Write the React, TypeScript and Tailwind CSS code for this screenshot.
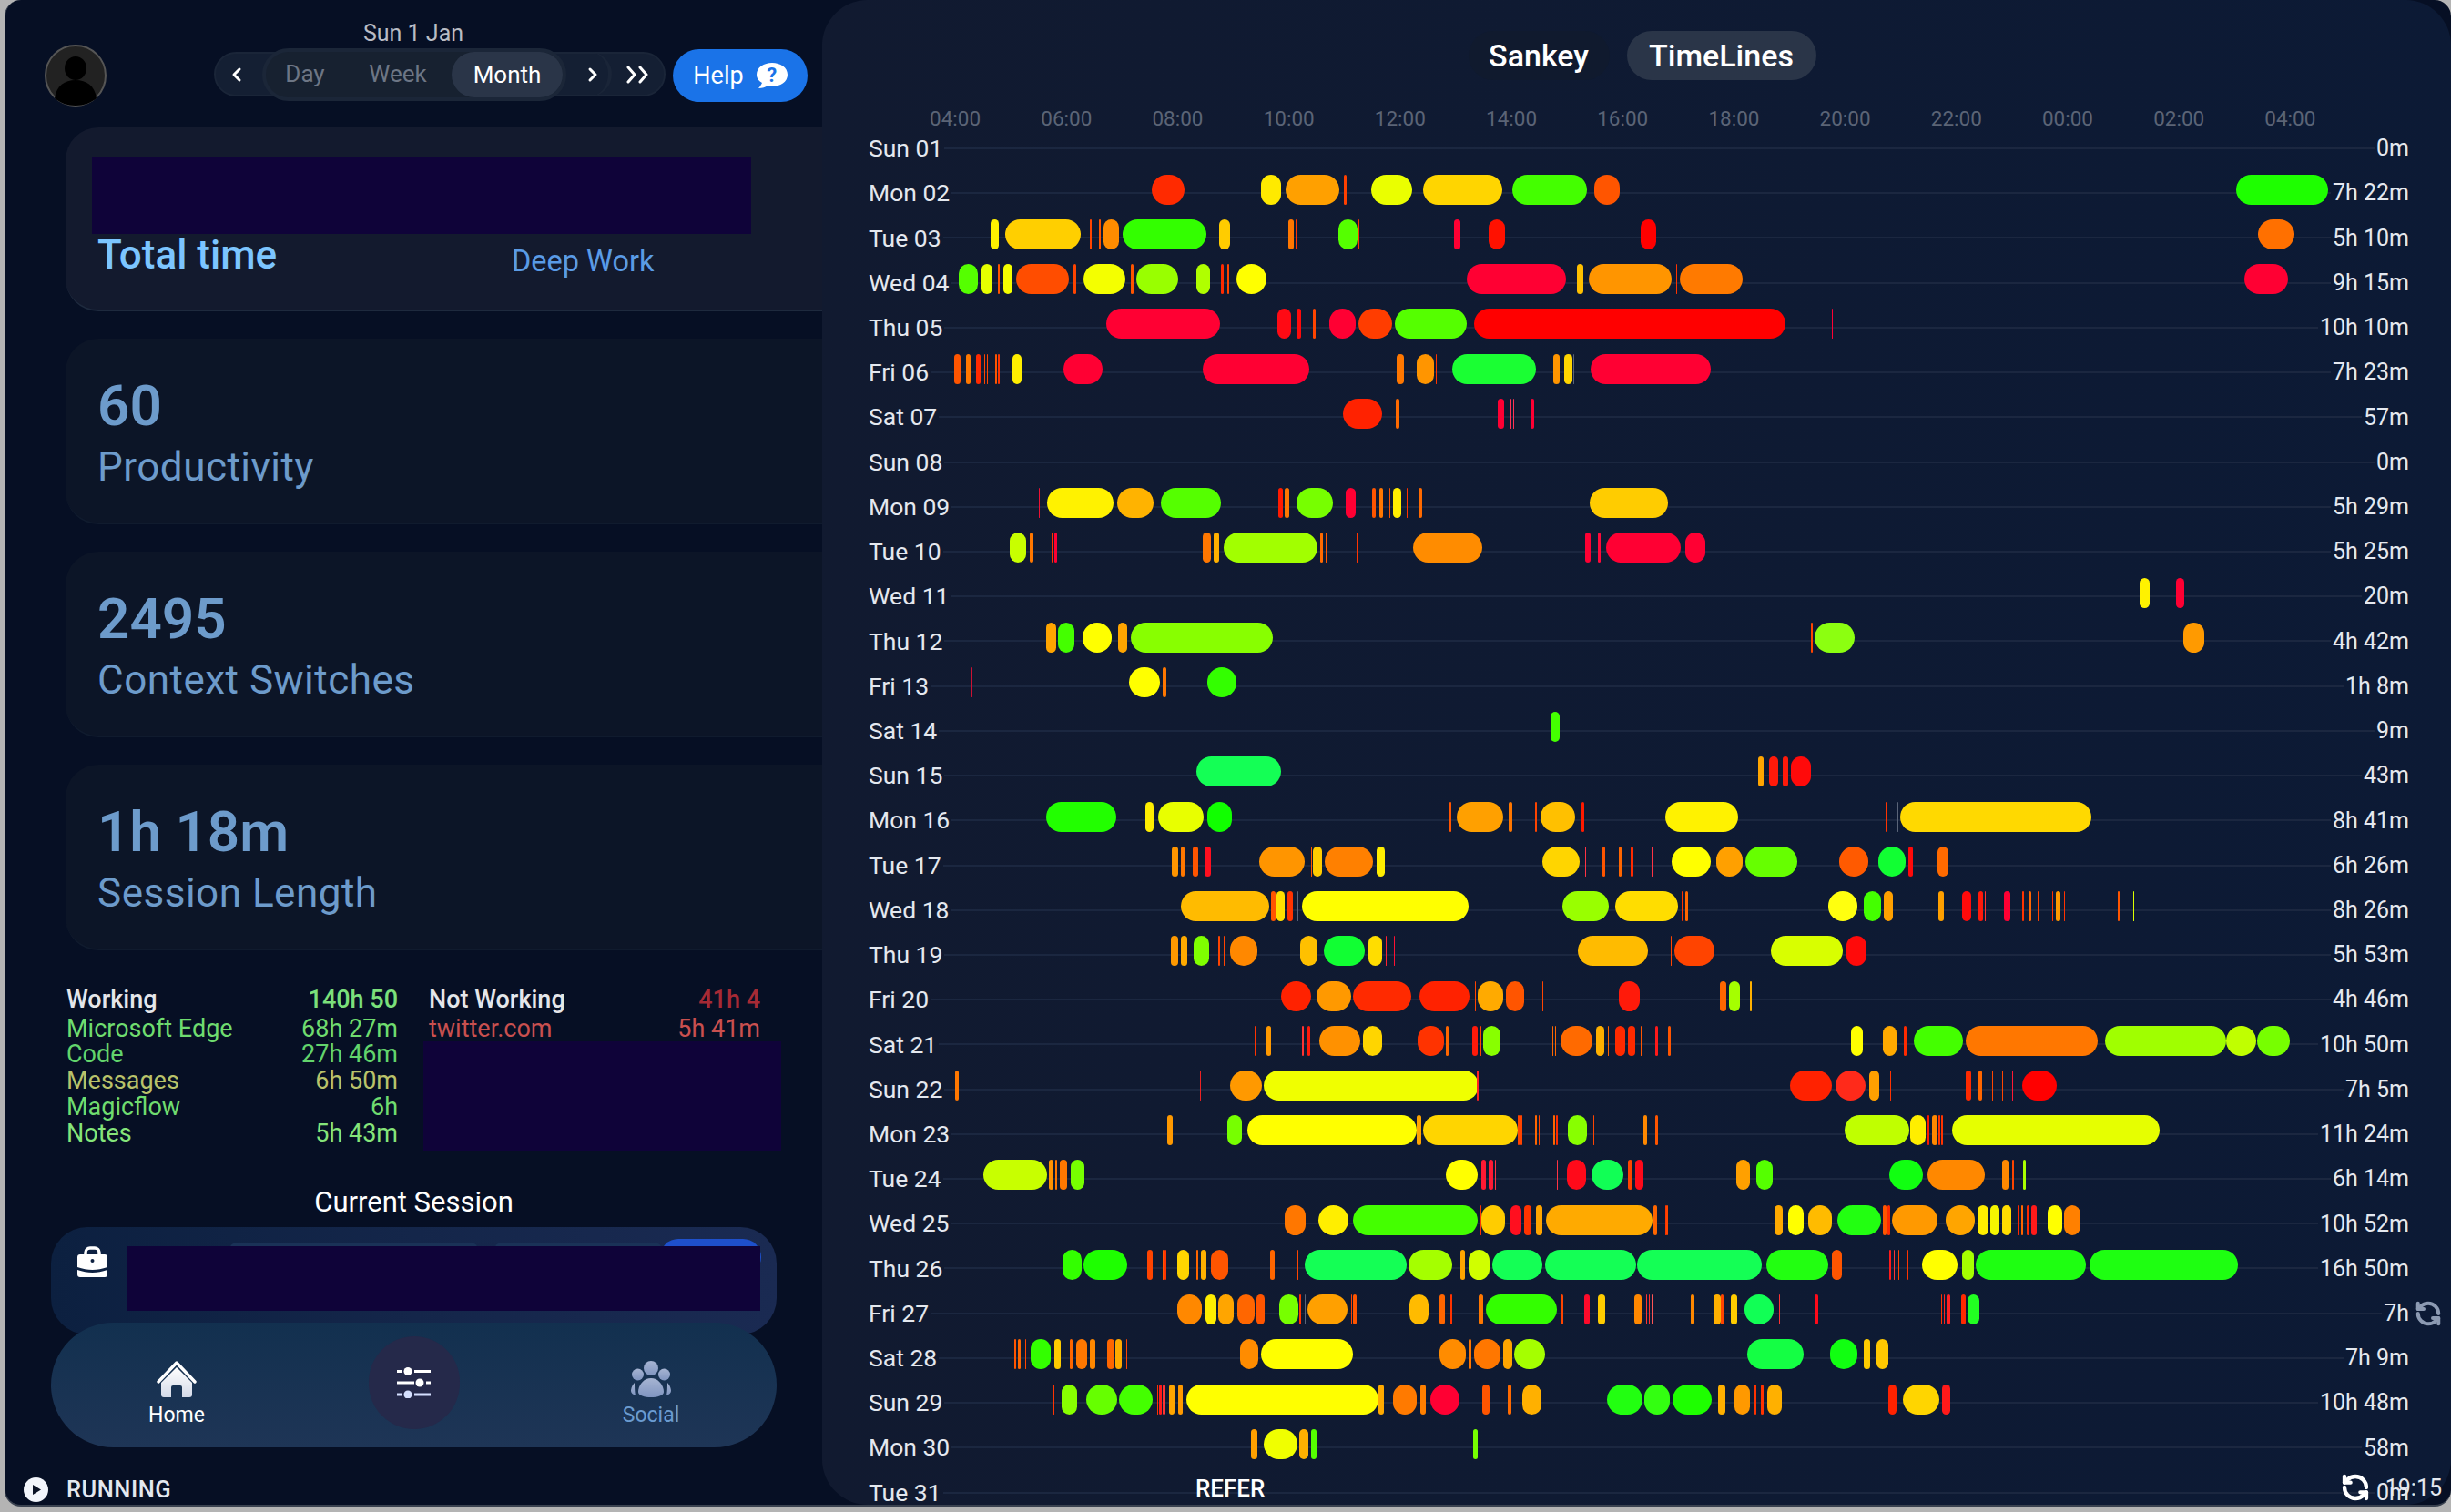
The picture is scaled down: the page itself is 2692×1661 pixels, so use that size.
import React from 'react'
import { ChevronLeft, ChevronRight, RefreshCcw } from 'lucide-react'

type Bar = [number, number, string]
interface Day {
  d: string
  t: string
  a?: Bar[]
  b?: Bar[]
}

// a: chart units, b: same units shifted by 1554. 1.7422 units = 1px
const X_SCALE = 1.7422
const B_SHIFT = 1554
const GREY = '#5a6478'

const days: Day[] = [
  { d: 'Sun 01', t: '0m' },
  {
    d: 'Mon 02', t: '7h 22m',
    a: [[636, 699, '#ff2a00'], [845, 884, '#ffea00'], [892, 995, '#ffa000'], [1004, 1009, '#ff4000'], [1056, 1134, '#eaff00'], [1155, 1307, '#ffd500'], [1326, 1469, '#44ff00'], [1483, 1531, '#ff5500']],
    b: [[1157, 1333, '#1eff00']],
  },
  {
    d: 'Tue 03', t: '5h 10m',
    a: [[328, 343, '#fff000'], [355, 500, '#ffcf00'], [517, 521, '#ff4400'], [535, 538, '#ff5500'], [543, 574, '#ff8c00'], [580, 740, '#33ff00'], [765, 786, '#ffcc00'], [897, 907, '#ff7700'], [911, 913, '#ff3300'], [993, 1029, '#55ff00'], [1031, 1033, '#ff3300'], [1214, 1227, '#ff0033'], [1281, 1312, '#ff1100']],
    b: [[17, 47, '#ff0000'], [1199, 1268, '#ff7000']],
  },
  {
    d: 'Wed 04', t: '9h 15m',
    a: [[267, 303, '#55ff00'], [310, 331, '#e6ff00'], [341, 345, '#ff5500'], [352, 369, '#f5ff00'], [377, 478, '#ff4d00'], [486, 491, '#ff4400'], [505, 585, '#f4ff00'], [596, 601, '#ff5500'], [606, 686, '#99ff00'], [721, 748, '#b0ff00'], [768, 774, '#ff2a00'], [781, 784, '#ff4400'], [798, 855, '#ffff00'], [1239, 1429, '#ff0033'], [1450, 1462, '#ffc000'], [1472, 1631, '#ff9500']],
    b: [[85, 87, '#ff3300'], [92, 213, '#ff7a00'], [1173, 1256, '#ff0033']],
  },
  {
    d: 'Thu 05', t: '10h 10m',
    a: [[549, 767, '#ff0033'], [876, 902, '#ff0a14'], [913, 922, '#ff0a0a'], [944, 950, '#ff4400'], [976, 1026, '#ff0033'], [1031, 1096, '#ff3d00'], [1101, 1239, '#55ff00'], [1253, 1848, '#ff0000']],
    b: [[383, 385, '#ff0033']],
  },
  {
    d: 'Fri 06', t: '7h 23m',
    a: [[258, 270, '#ff5500'], [280, 289, '#ff7700'], [300, 308, '#ff2a00'], [315, 317, '#ff4400'], [320, 323, '#ff4400'], [336, 339, '#ff5500'], [342, 345, '#ff3300'], [369, 387, '#ffee00'], [467, 542, '#ff0033'], [733, 937, '#ff0033'], [1105, 1119, '#ff7700'], [1143, 1176, '#ff9500'], [1179, 1181, '#ff3300'], [1211, 1371, '#1aff33'], [1404, 1417, '#ff9500'], [1425, 1440, '#ffd500'], [1443, 1444, GREY], [1476, 1706, '#ff0033']],
  },
  {
    d: 'Sat 07', t: '57m',
    a: [[1002, 1077, '#ff2200'], [1103, 1110, '#ff6a00'], [1298, 1310, '#ff0033'], [1322, 1324, '#ff3355'], [1327, 1330, '#ff3355'], [1361, 1368, '#ff0033']],
  },
  { d: 'Sun 08', t: '0m' },
  {
    d: 'Mon 09', t: '5h 29m',
    a: [[420, 422, '#ee1133'], [436, 563, '#fff200'], [570, 639, '#ffb300'], [653, 768, '#55ff00'], [878, 886, '#ff1a00'], [890, 899, '#ff7700'], [913, 983, '#77ff00'], [1007, 1026, '#ff0033'], [1058, 1064, '#ff5500'], [1072, 1078, '#ff7700'], [1091, 1093, '#ff5500'], [1098, 1113, '#ffee00'], [1124, 1126, '#ff3300'], [1146, 1153, '#ff6a00'], [1474, 1624, '#ffcc00']],
  },
  {
    d: 'Tue 10', t: '5h 25m',
    a: [[364, 396, '#c8ff00'], [402, 409, '#ff7700'], [444, 447, '#ff3300'], [449, 454, '#ff0033'], [733, 749, '#ff7700'], [754, 765, '#ffb000'], [774, 953, '#a2ff00'], [958, 964, '#ff6a00'], [969, 971, '#ff5500'], [1028, 1030, '#ff3300'], [1136, 1268, '#ff8c00'], [1465, 1476, '#ff0033'], [1490, 1495, '#ff0a3a'], [1505, 1648, '#ff0033']],
    b: [[103, 141, '#ff0033']],
  },
  {
    d: 'Wed 11', t: '20m',
    b: [[972, 991, '#fff200'], [1031, 1033, '#ff3300'], [1042, 1058, '#ff0033']],
  },
  {
    d: 'Thu 12', t: '4h 42m',
    a: [[434, 453, '#ffa500'], [457, 488, '#44ff00'], [504, 559, '#ffff00'], [571, 589, '#ffa500'], [596, 868, '#88ff00']],
    b: [[343, 347, '#ff4400'], [351, 427, '#8cff10'], [1056, 1096, '#ff9a00']],
  },
  {
    d: 'Fri 13', t: '1h 8m',
    a: [[291, 293, '#cc1133'], [592, 652, '#ffff00'], [657, 664, '#ff7700'], [742, 798, '#33ff00']],
  },
  { d: 'Sat 14', t: '9m', a: [[1399, 1416, '#44ff00']] },
  {
    d: 'Sun 15', t: '43m',
    a: [[721, 883, '#14ff55']],
    b: [[242, 253, '#ffa500'], [263, 280, '#ff1a0a'], [289, 300, '#ff1a0a'], [305, 343, '#ff0a0a']],
  },
  {
    d: 'Mon 16', t: '8h 41m',
    a: [[434, 568, '#22ff00'], [624, 639, '#ffee00'], [648, 735, '#e8ff00'], [742, 789, '#11ff00'], [1206, 1209, '#ff5500'], [1220, 1308, '#ffa000'], [1319, 1326, '#ff7700'], [1369, 1373, '#ff4400'], [1380, 1446, '#ffc000'], [1458, 1463, '#ff1a00']],
    b: [[64, 204, '#fff200'], [486, 490, '#ff3300'], [508, 509, GREY], [514, 880, '#ffd900']],
  },
  {
    d: 'Tue 17', t: '6h 26m',
    a: [[674, 686, '#ff9500'], [692, 698, '#ff7700'], [714, 725, '#ff5500'], [737, 749, '#ff0f1f'], [841, 929, '#ff9500'], [940, 942, '#ff5500'], [944, 962, '#ffcc00'], [967, 1059, '#ff8000'], [1066, 1082, '#ffee00'], [1383, 1455, '#ffd500'], [1465, 1467, '#ff3344'], [1498, 1504, '#ff5500'], [1530, 1535, '#ff6600'], [1552, 1557, '#ff2a00']],
    b: [[38, 40, '#ff3344'], [77, 152, '#ffff00'], [162, 212, '#ffa000'], [218, 317, '#66ff00'], [397, 453, '#ff5a00'], [472, 524, '#11ff33'], [530, 538, '#ff0a0a'], [585, 606, '#ff6a00']],
  },
  {
    d: 'Wed 18', t: '8h 26m',
    a: [[692, 861, '#ffbb00'], [864, 872, '#ff5500'], [875, 890, '#ffe000'], [896, 906, '#ff3300'], [915, 916, GREY], [923, 1242, '#ffff00'], [1422, 1511, '#99ff00'], [1523, 1643, '#ffdd00']],
    b: [[96, 99, '#ff3300'], [103, 108, '#ff6600'], [376, 432, '#ffff0f'], [444, 477, '#44ff00'], [483, 500, '#ffa000'], [587, 598, '#ffa000'], [632, 650, '#ff0a0a'], [664, 672, '#ff1a0a'], [676, 678, '#ff3333'], [713, 725, '#ff0033'], [747, 751, '#ff3300'], [760, 765, '#ff6600'], [777, 779, '#ff4400'], [805, 807, '#ff3300'], [812, 821, '#ff9900'], [827, 829, '#ff3300'], [930, 934, '#ff5500'], [960, 962, '#ddff00']],
  },
  {
    d: 'Thu 19', t: '5h 53m',
    a: [[672, 686, '#ff9900'], [692, 704, '#ffaa00'], [716, 746, '#7fff00'], [763, 767, '#ff4400'], [773, 775, '#ff4400'], [786, 838, '#ff8800'], [920, 953, '#ffc000'], [966, 1044, '#11ff33'], [1051, 1077, '#ffdd00'], [1084, 1086, '#ff2233'], [1099, 1101, '#ff1133'], [1451, 1585, '#ffbb00']],
    b: [[75, 77, '#ff4400'], [82, 159, '#ff4400'], [267, 404, '#d8ff00'], [411, 449, '#ff0a0a']],
  },
  {
    d: 'Fri 20', t: '4h 46m',
    a: [[883, 941, '#ff2200'], [952, 1017, '#ff9900'], [1021, 1132, '#ff2a00'], [1148, 1244, '#ff2200'], [1255, 1257, '#ff4400'], [1260, 1308, '#ffaa00'], [1314, 1348, '#ff5500'], [1383, 1385, '#ff4400'], [1530, 1570, '#ff1a0a']],
    b: [[169, 181, '#ff6600'], [187, 207, '#a5ff00'], [226, 230, '#ffb000']],
  },
  {
    d: 'Sat 21', t: '10h 50m',
    a: [[833, 836, '#ff3300'], [855, 864, '#ff9900'], [924, 926, '#ff3333'], [934, 939, '#ff1a0a'], [956, 1035, '#ff9100'], [1040, 1077, '#ffd500'], [1145, 1196, '#ff3300'], [1199, 1204, '#ff6600'], [1249, 1259, '#ff1a0a'], [1265, 1267, '#ff4400'], [1270, 1303, '#88ff00'], [1402, 1404, '#ff6600'], [1408, 1410, '#ff6600'], [1418, 1479, '#ff6a00'], [1486, 1502, '#ffb000'], [1508, 1510, '#ff6600'], [1523, 1542, '#ff2a00'], [1547, 1561, '#ff2a00']],
    b: [[17, 19, '#ff5500'], [46, 51, '#ff1a1a'], [70, 75, '#ff5500'], [420, 443, '#ffff00'], [481, 507, '#ffaa00'], [521, 526, '#ff2a00'], [540, 634, '#44ff00'], [639, 892, '#ff7700'], [906, 1138, '#a0ff00'], [1138, 1195, '#c0ff00'], [1197, 1260, '#77ff00']],
  },
  {
    d: 'Sun 22', t: '7h 5m',
    a: [[260, 267, '#ff7700'], [728, 730, '#ee2222'], [786, 847, '#ff9900'], [850, 1262, '#f0ff00'], [1258, 1261, '#ff2222']],
    b: [[303, 384, '#ff2200'], [390, 448, '#ff2a1a'], [455, 474, '#ffa000'], [495, 497, '#ff3300'], [639, 650, '#ff2a00'], [664, 671, '#ff6600'], [690, 692, '#ff4400'], [709, 711, '#ff4400'], [728, 730, '#ff1a33'], [747, 814, '#ff0000']],
  },
  {
    d: 'Mon 23', t: '11h 24m',
    a: [[666, 676, '#ff9900'], [781, 808, '#77ff00'], [815, 817, '#ff4400'], [819, 1143, '#ffff00'], [1143, 1152, '#ffa500'], [1155, 1337, '#ffd500'], [1337, 1340, '#ff4400'], [1342, 1345, '#ff4400'], [1369, 1372, '#ff6600'], [1376, 1378, '#ff4400'], [1405, 1408, '#ff6600'], [1410, 1413, '#ff2a00'], [1432, 1469, '#88ff00'], [1481, 1483, '#ff4400']],
    b: [[23, 29, '#ff8800'], [45, 51, '#ff5500'], [408, 532, '#c0ff00'], [533, 563, '#ffee00'], [566, 570, '#ff1a00'], [575, 585, '#ff8800'], [588, 591, '#ff3300'], [593, 596, '#ff3300'], [613, 1010, '#e6ff00']],
  },
  {
    d: 'Tue 24', t: '6h 14m',
    a: [[314, 436, '#c8ff00'], [439, 447, '#ff9100'], [451, 455, '#ff7700'], [460, 474, '#ff7700'], [481, 507, '#77ff00'], [1199, 1260, '#ffff00'], [1267, 1275, '#ff1a33'], [1280, 1290, '#ff1a33'], [1292, 1294, '#ff3344'], [1411, 1413, '#ff3344'], [1430, 1467, '#ff0a1a'], [1477, 1538, '#11ff55'], [1547, 1555, '#ff4400'], [1561, 1577, '#ff0a1a']],
    b: [[200, 227, '#ffa000'], [238, 270, '#55ff00'], [493, 558, '#11ff11'], [566, 676, '#ff8800'], [709, 721, '#ff8800'], [729, 732, '#ff4400'], [749, 754, '#aaff00']],
  },
  {
    d: 'Wed 25', t: '10h 52m',
    a: [[890, 930, '#ff7700'], [955, 1012, '#ffee00'], [1021, 1260, '#44ff00'], [1265, 1267, '#ff3300'], [1267, 1312, '#ffcc00'], [1322, 1344, '#ff0f1f'], [1348, 1362, '#ff3300'], [1371, 1383, '#ffa500'], [1390, 1594, '#ffaa00']],
    b: [[42, 49, '#ff6600'], [64, 66, '#ff3300'], [67, 70, '#ff4400'], [274, 289, '#ffaa00'], [299, 330, '#ffff00'], [338, 383, '#ffbb00'], [394, 478, '#22ff11'], [481, 488, '#ff5500'], [490, 495, '#ff2a00'], [498, 585, '#ff9900'], [601, 657, '#ffa500'], [662, 683, '#ffee00'], [686, 704, '#f5f500'], [709, 727, '#ffdd00'], [739, 741, '#ff2a00'], [746, 749, '#ff6600'], [757, 762, '#ff2a00'], [765, 775, '#ff1a1a'], [796, 824, '#ffff00'], [828, 859, '#ff8000']],
  },
  {
    d: 'Thu 26', t: '16h 50m',
    a: [[465, 501, '#33ff00'], [505, 589, '#1eff00'], [627, 638, '#ff4400'], [657, 659, '#ff5500'], [661, 663, '#ff3300'], [685, 707, '#ffd500'], [721, 725, '#ff6600'], [730, 741, '#ffb000'], [749, 782, '#ff5500'], [862, 871, '#ff6600'], [915, 917, '#ff4400'], [929, 1124, '#14ff55'], [1127, 1211, '#a5ff00'], [1227, 1235, '#ffa500'], [1242, 1283, '#d0ff00'], [1288, 1384, '#14ff55'], [1389, 1562, '#14ff55'], [1564, 1804, '#14ff55']],
    b: [[258, 376, '#22ff11'], [383, 402, '#ff5500'], [493, 496, '#ff1a1a'], [502, 504, '#ff3333'], [510, 512, '#ff4400'], [527, 530, '#ff3300'], [556, 624, '#ffff00'], [632, 655, '#a5ff00'], [659, 870, '#1eff11'], [876, 1160, '#1eff11']],
  },
  {
    d: 'Fri 27', t: '7h',
    a: [[685, 732, '#ff8800'], [739, 760, '#ffee00'], [763, 793, '#ffa500'], [800, 832, '#ff6600'], [836, 852, '#ff5500'], [880, 916, '#77ff00'], [918, 922, '#ff3300'], [928, 930, GREY], [934, 1011, '#ffa000'], [1017, 1020, '#ff4400'], [1021, 1028, '#ff5500'], [1129, 1166, '#ffbb00'], [1186, 1197, '#ff6600'], [1207, 1211, '#ff3300'], [1261, 1270, '#ff7700'], [1275, 1411, '#33ff00'], [1419, 1423, '#ff4400'], [1463, 1474, '#ff0a2a'], [1490, 1504, '#ffcc00'], [1559, 1573, '#ff8800']],
    b: [[28, 30, '#ff3333'], [33, 35, '#ff3333'], [39, 41, '#ff5555'], [113, 120, '#ff8800'], [157, 170, '#ffb000'], [171, 176, '#ff4400'], [190, 202, '#ffcc00'], [216, 272, '#11ff55'], [282, 284, '#ff3333'], [351, 357, '#ff0a1a'], [592, 595, '#ff3300'], [598, 600, '#ff2222'], [603, 610, '#ff2222'], [631, 640, '#ff2a00'], [643, 666, '#22ff22']],
  },
  {
    d: 'Sat 28', t: '7h 9m',
    a: [[373, 377, '#ff5500'], [380, 385, '#ff6600'], [393, 396, '#ff4400'], [404, 442, '#33ff00'], [449, 462, '#ffcc00'], [479, 484, '#ff6600'], [491, 513, '#ff7700'], [517, 528, '#ff8800'], [551, 564, '#ff6600'], [567, 579, '#ffaa00'], [587, 589, '#ff4400'], [805, 840, '#ff8c00'], [845, 1021, '#ffff00'], [1186, 1237, '#ff8c00'], [1243, 1248, '#ff7700'], [1252, 1304, '#ff7700'], [1308, 1326, '#ffa500'], [1330, 1389, '#a5ff00']],
    b: [[221, 329, '#14ff44'], [380, 432, '#11ff11'], [444, 456, '#ffcc00'], [469, 491, '#ffc800']],
  },
  {
    d: 'Sun 29', t: '10h 48m',
    a: [[448, 450, '#ff3300'], [463, 493, '#88ff00'], [510, 570, '#66ff00'], [573, 638, '#44ff00'], [646, 648, '#ff3300'], [650, 655, '#ff1a1a'], [656, 662, '#ff3333'], [669, 680, '#ffa500'], [686, 695, '#ff9900'], [702, 1070, '#ffff00'], [1070, 1080, '#ffaa00'], [1098, 1143, '#ff7a00'], [1150, 1160, '#ff8000'], [1169, 1225, '#ff0033'], [1268, 1282, '#ff5500'], [1317, 1324, '#ff6a00'], [1345, 1382, '#ffb000'], [1507, 1575, '#22ff11']],
    b: [[25, 73, '#33ff11'], [78, 153, '#1eff00'], [166, 179, '#ffb000'], [197, 227, '#ff9900'], [235, 239, '#ff3300'], [248, 253, '#ff3300'], [260, 287, '#ffb000'], [491, 507, '#ff2200'], [519, 589, '#ffd500'], [594, 610, '#ff1a1a']],
  },
  {
    d: 'Mon 30', t: '58m',
    a: [[826, 838, '#ffa000'], [850, 915, '#f0ff00'], [918, 936, '#ffb000'], [941, 951, '#55ff00'], [1251, 1260, '#77ff00']],
  },
  { d: 'Tue 31', t: '0m' },
]

const hours = ['04:00', '06:00', '08:00', '10:00', '12:00', '14:00', '16:00', '18:00', '20:00', '22:00', '00:00', '02:00', '04:00']

const working: [string, string, string][] = [
  ['Microsoft Edge', '68h 27m', 'text-[#6fdc6f]'],
  ['Code', '27h 46m', 'text-[#62d46c]'],
  ['Messages', '6h 50m', 'text-[#b9c26a]'],
  ['Magicflow', '6h', 'text-[#6fdc6f]'],
  ['Notes', '5h 43m', 'text-[#85e57a]'],
]

// panel starts 903px from the page edge, bars are 33px tall pills
function TimelineBar({ start, end, color }: { start: number; end: number; color: string }) {
  const left = (start / X_SCALE) - 3
  const width = (end - start) / X_SCALE
  return (
    <div
      className="absolute top-[4px] h-[33px] rounded-[16.500px]"
      style={{ left, width, backgroundColor: color }}
    />
  )
}

function TimelineRow({ day }: { day: Day }) {
  return (
    <div className="relative flex items-center h-[49.23px] pl-[51px] pr-[46px]">
      <span className="text-[26.500px] text-[#e4e8ef]">{day.d}</span>
      <div className="flex-1 h-[2px] mx-[2px] bg-[#1b2740]" />
      <span className="text-[25px] text-[#e4e8ef]">{day.t}</span>
      {day.a?.map(([s, e, c]) => <TimelineBar key={s} start={s} end={e} color={c} />)}
      {day.b?.map(([s, e, c]) => <TimelineBar key={s} start={s + B_SHIFT} end={e + B_SHIFT} color={c} />)}
    </div>
  )
}

function StatCard({ value, label }: { value: string; label: string }) {
  return (
    <div className="h-[204px] ml-[66px] mt-[30px] pl-[35px] pt-[35px] rounded-l-[36px] bg-[#0c1527] border-b-2 border-[#101b2e]">
      <div className="text-[62px] leading-[78px] font-semibold text-[#6d9bcb]">{value}</div>
      <div className="text-[44px] leading-[50px] mt-[3px] tracking-[0.5px] text-[#6d9bcb]">{label}</div>
    </div>
  )
}

function Avatar() {
  return (
    <svg viewBox="0 0 68 70" className="w-[68px] h-[70px] mt-[48px] shrink-0">
      <circle cx="34" cy="35" r="33" fill="#222" stroke="#555" strokeWidth="2" />
      <ellipse cx="34" cy="27" rx="12" ry="13" fill="#000" />
      <path d="M11 60c2-14 11-20 23-20s21 6 23 20c-6 5-14 8-23 8s-17-3-23-8z" fill="#000" />
    </svg>
  )
}

function HelpBubble() {
  return (
    <span className="relative flex items-center justify-center w-[34px] h-[28px] ml-[14px]">
      <svg viewBox="0 0 34 28" className="absolute inset-0">
        <path d="M17 0c9 0 17 5 17 13s-8 13-17 13c-2 0-3 0-5-1-2 2-6 3-10 3 2-2 3-4 4-6C2 20 0 17 0 13 0 5 8 0 17 0z" fill="#fff" />
      </svg>
      <span className="relative text-[22px] leading-none font-bold text-[#1a73e8]">?</span>
    </span>
  )
}

function HomeIcon() {
  return (
    <svg viewBox="0 0 44 41" className="w-[44px] h-[41px]">
      <defs>
        <linearGradient id="homeFill" x1="0" y1="0" x2="0" y2="1">
          <stop offset="0" stopColor="#fff" />
          <stop offset="1" stopColor="#d4dae8" />
        </linearGradient>
      </defs>
      <path d="M2 24L22 3l20 21" fill="none" stroke="#fff" strokeWidth="3.4" strokeLinecap="round" strokeLinejoin="round" />
      <path d="M5 25L22 8l17 17v13a3 3 0 0 1-3 3h-8V30a2 2 0 0 0-2-2h-8a2 2 0 0 0-2 2v11H8a3 3 0 0 1-3-3z" fill="url(#homeFill)" />
    </svg>
  )
}

function SlidersIcon() {
  return (
    <svg viewBox="0 0 37 34" className="w-[37px] h-[34px]" stroke="#fff" strokeWidth="3" fill="#fff">
      <path d="M0 4.5h5M19 4.5h18M0 17h19M32 17h5" />
      <circle cx="12" cy="4.5" r="4.5" stroke="none" />
      <circle cx="25" cy="17" r="4.5" stroke="none" />
      <path d="M0 30h5M19 30h18" stroke="#d5e0ff" />
      <circle cx="12" cy="30" r="4.5" stroke="none" fill="#d5e0ff" />
    </svg>
  )
}

function SocialIcon() {
  return (
    <svg viewBox="0 0 44 40" className="w-[44px] h-[40px]">
      <defs>
        <linearGradient id="socialFill" x1="0" y1="0" x2="0" y2="1">
          <stop offset="0" stopColor="#a6b4d2" />
          <stop offset="1" stopColor="#8095c0" />
        </linearGradient>
      </defs>
      <g fill="url(#socialFill)">
        <circle cx="22" cy="8" r="8" />
        <circle cx="7.5" cy="15" r="6.5" />
        <circle cx="36.5" cy="15" r="6.5" />
        <path d="M22 19c-9 0-14 9-14 15 0 4 7 6 14 6s14-2 14-6c0-6-5-15-14-15z" />
        <path d="M4 24c-3 3-4 7-4 9 0 2 2 4 5 5-1-5-1-9-1-14zM40 24c3 3 4 7 4 9 0 2-2 4-5 5 1-5 1-9 1-14z" />
      </g>
    </svg>
  )
}

function BriefcaseIcon() {
  return (
    <svg viewBox="0 0 33 34" className="w-[33px] h-[34px] shrink-0" fill="#fff">
      <path d="M9 9V7a5 5 0 0 1 5-5h5a5 5 0 0 1 5 5v2" fill="none" stroke="#fff" strokeWidth="3.5" />
      <path fillRule="evenodd" d="M3 9h27a3 3 0 0 1 3 3v11c-6 2-11 3-16.500 3S6 25 0 23V12a3 3 0 0 1 3-3zm13.500 5a2 2 0 1 0 0 4 2 2 0 0 0 0-4z" />
      <path d="M0 26c6 2 11 3 16.500 3S27 28 33 26v5a3 3 0 0 1-3 3H3a3 3 0 0 1-3-3z" />
    </svg>
  )
}

function DoubleChevron() {
  return (
    <svg viewBox="0 0 26 20" className="w-[26px] h-[20px]" fill="none" stroke="#fff" strokeWidth="3" strokeLinecap="round" strokeLinejoin="round">
      <path d="M3 2l7 8-7 8M16 2l7 8-7 8" />
    </svg>
  )
}

function Sidebar() {
  return (
    <div className="w-[897px] shrink-0 flex flex-col">
      {/* Top bar */}
      <div className="flex items-start h-[134px] pl-[43px]">
        <Avatar />
        <div className="ml-[118px] w-[496px] shrink-0">
          <div className="pr-[58px] text-center text-[25px] leading-[26px] mt-[24px] text-[#b8bcc4]">Sun 1 Jan</div>
          <div className="flex items-center h-[49px] mt-[7px] rounded-full bg-[#141f33] border-2 border-[#1a2538]">
            <div className="w-[51px] pr-[6px] flex justify-center"><ChevronLeft size={24} strokeWidth={3} color="#fff" /></div>
            <div className="flex items-center w-[334px] h-[58px] rounded-full bg-[#172130] border-4 border-[#1b2638]">
              <span className="w-[86px] text-center text-[26px] text-[#6d7685]">Day</span>
              <span className="w-[118px] text-center text-[26px] text-[#6d7685]">Week</span>
              <span className="flex-1 h-[50px] rounded-full bg-[#2a3548] text-center text-[26px] leading-[50px] text-white">Month</span>
            </div>
            <div className="w-[50px] h-[49px] pl-[12px] flex items-center justify-center rounded-r-full border-r-4 border-[#1a2538]"><ChevronRight size={24} strokeWidth={3} color="#fff" /></div>
            <div className="flex-1 pr-[2px] flex justify-center"><DoubleChevron /></div>
          </div>
        </div>
        <div className="flex items-center justify-center w-[148px] h-[58px] ml-[8px] mt-[54px] rounded-full bg-[#1a73e8]">
          <span className="text-[27px] text-white">Help</span>
          <HelpBubble />
        </div>
      </div>

      {/* Total time */}
      <div className="h-[202px] ml-[66px] mt-[6px] pl-[29px] pt-[32px] rounded-l-[36px] bg-[#131a2e] border-b-2 border-[#1e2a3e]">
        <div className="w-[724px] h-[85px] bg-[#0f0339]" />
        <div className="flex pl-[6px]">
          <span className="w-[455px] text-[44px] leading-[46px] font-medium text-[#7cc5ff]">Total time</span>
          <span className="text-[32.500px] leading-[46px] mt-[7px] text-[#5a9be6]">Deep Work</span>
        </div>
      </div>

      <StatCard value="60" label="Productivity" />
      <StatCard value="2495" label="Context Switches" />
      <StatCard value="1h 18m" label="Session Length" />

      {/* Working / not working */}
      <div className="grid grid-cols-2 gap-x-[34px] w-[762px] ml-[67px] mt-[40px] text-[27px] leading-[28.700px]">
        <div>
          <div className="flex justify-between font-medium mb-[3px]">
            <span className="text-[#e4e6ea]">Working</span>
            <span className="text-[#7be07b]">140h 50</span>
          </div>
          {working.map(([name, time, color]) => (
            <div key={name} className={`flex justify-between ${color}`}>
              <span>{name}</span>
              <span>{time}</span>
            </div>
          ))}
        </div>
        <div>
          <div className="flex justify-between font-medium mb-[3px]">
            <span className="text-[#e4e6ea]">Not Working</span>
            <span className="text-[#a52a35]">41h 4</span>
          </div>
          <div className="flex justify-between text-[#c9504f]">
            <span>twitter.com</span>
            <span>5h 41m</span>
          </div>
          <div className="w-[393px] h-[120px] -ml-[6px] bg-[#0f0339]" />
        </div>
      </div>

      <div className="text-center text-[31px] leading-[32px] mt-[41px] text-white">Current Session</div>

      {/* Current session */}
      <div className="relative flex items-start h-[118px] w-[797px] ml-[50px] mt-[11px] pl-[29px] pt-[21px] rounded-[40px] bg-gradient-to-r from-[#0c2040] via-[#14264a] to-[#1a2a52]">
        <BriefcaseIcon />
        <div className="absolute top-[17px] left-[196px] w-[273px] h-[8px] rounded-t-[10px] bg-[#1a3257]" />
        <div className="absolute top-[17px] left-[487px] w-[184px] h-[8px] rounded-t-[10px] bg-[#1a3257]" />
        <div className="absolute top-[13px] left-[669px] w-[111px] h-[40px] rounded-[30px] bg-[#1e50cc]" />
        <div className="relative w-[695px] h-[71px] ml-[22px] bg-[#0f0339]" />
      </div>

      {/* Bottom nav */}
      <div className="relative flex items-center justify-between w-[797px] h-[137px] ml-[50px] -mt-[13px] px-[108px] rounded-[70px] bg-gradient-to-b from-[#12304f] to-[#1e3556]">
        <div className="flex flex-col items-center w-[60px] gap-[8px] pt-[18px]">
          <HomeIcon />
          <span className="text-[23px] leading-[24px] text-white">Home</span>
        </div>
        <div className="flex items-center justify-center w-[100px] h-[102px] mb-[5px] rounded-full bg-[#25294a]">
          <SlidersIcon />
        </div>
        <div className="flex flex-col items-center w-[60px] gap-[8px] pt-[18px]">
          <SocialIcon />
          <span className="text-[23px] leading-[24px] text-[#6a9bd0]">Social</span>
        </div>
      </div>

      <div className="flex items-center gap-[20px] pl-[20px] mt-[32px]">
        <svg viewBox="0 0 27 27" className="w-[27px] h-[27px]">
          <circle cx="13.500" cy="13.500" r="13.500" fill="#f2f5fb" />
          <path d="M10 8l9 5.500-9 5.500z" fill="#0a1226" />
        </svg>
        <span className="text-[25.500px] leading-[28px] font-medium tracking-[0.5px] text-[#e4e8ef]">RUNNING</span>
      </div>
    </div>
  )
}

function Timeline() {
  return (
    <div className="relative flex-1 flex flex-col rounded-[50px] bg-gradient-to-r from-[#111a30] to-[#0c1a35]">
      <div className="flex items-center justify-center gap-[19px] pt-[34px] pl-[12px]">
        <span className="w-[155px] h-[54px] rounded-full bg-[#101a2e] text-center text-[34px] leading-[54px] font-medium text-white">Sankey</span>
        <span className="w-[208px] h-[54px] rounded-full bg-[#2a3548] text-center text-[34px] leading-[54px] font-medium text-white">TimeLines</span>
      </div>
      <div className="flex pl-[85px] mt-[30px] mb-[-3.600px]">
        {hours.map((h, i) => (
          <span key={i} className="w-[122.200px] text-center text-[22.500px] leading-[24px] text-[#5b6476]">{h}</span>
        ))}
      </div>
      <div>
        {days.map((day) => <TimelineRow key={day.d} day={day} />)}
      </div>
      {/* floating bits over the chart */}
      <RefreshCcw size={30} strokeWidth={3.2} color="#8c9ab2" className="absolute right-[10px] top-[1428px]" />
      <span className="absolute left-[410px] bottom-[4px] text-[26px] leading-[28px] font-medium text-white">REFER</span>
      <RefreshCcw size={32} strokeWidth={3.2} color="#fff" className="absolute right-[89px] bottom-[3px]" />
      <span className="absolute right-[10px] bottom-[3px] text-[25px] leading-[30px] text-[#e4e8ef]">19:15</span>
    </div>
  )
}

export default function App() {
  return (
    <div className="w-[2692px] h-[1661px] overflow-hidden bg-[#b4b4b4] pl-[5px] pb-[6px] font-['Roboto',sans-serif]">
      <div className="flex h-full overflow-hidden rounded-[18px] border-b-2 border-l border-[#3a4250] bg-[#060f24]">
        <Sidebar />
        <Timeline />
      </div>
    </div>
  )
}
